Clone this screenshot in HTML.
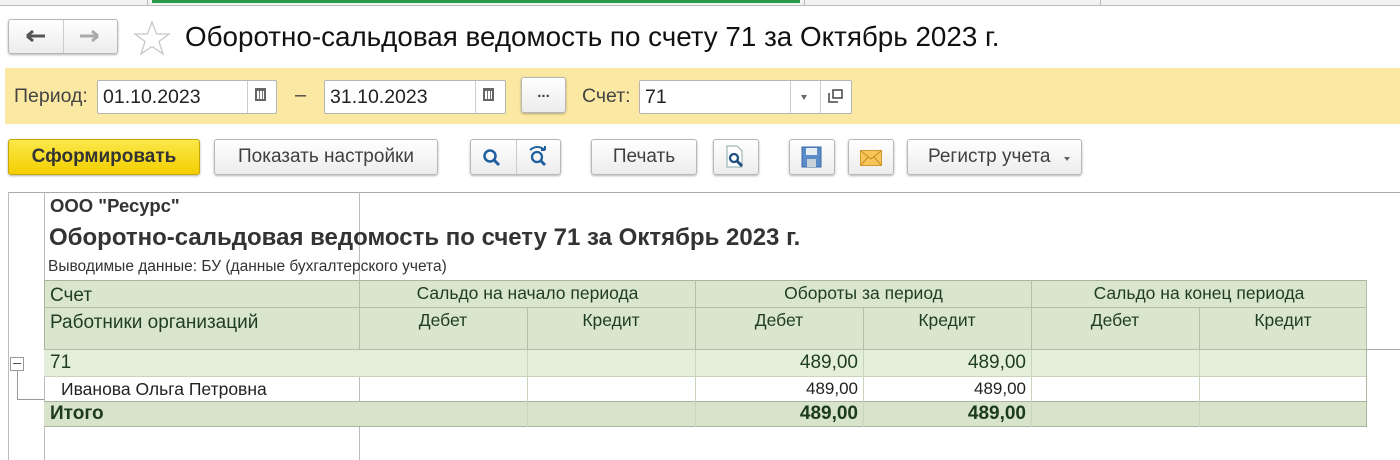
<!DOCTYPE html>
<html><head><meta charset="utf-8"><style>
*{box-sizing:border-box;margin:0;padding:0}
body{width:1400px;height:460px;background:#fff;font-family:"Liberation Sans","Noto Sans CJK SC",sans-serif;position:relative;overflow:hidden;color:#333}
.a{position:absolute}
.btn{position:absolute;border:1px solid #b8b8b8;border-radius:3px;background:linear-gradient(#fff,#ececec);box-shadow:0 1px 2px rgba(0,0,0,.3);font-size:19px;color:#404040;text-align:center;line-height:34px;height:36px;white-space:nowrap}
.inp{position:absolute;background:#fff;border:1px solid #b5b5b5;border-radius:2px;height:34px;font-size:19.5px;color:#222;line-height:32px;padding-left:5px}
.t{position:absolute;font-size:19px;color:#1f3d22;white-space:nowrap}
.cell{position:absolute;border-right:1px solid #b3bfa8;border-bottom:1px solid #b3bfa8}
.h{font-size:17.5px}
</style></head><body>
<div class="a" style="left:0;top:0;width:1400px;height:6px;background:#f2f2f2;border-bottom:1px solid #bdbdbd"></div>
<div class="a" style="left:152px;top:0;width:648px;height:3px;background:#2a9a4a"></div>
<div class="a" style="left:147px;top:0;width:1px;height:6px;background:#bbb"></div>
<div class="a" style="left:804px;top:0;width:1px;height:6px;background:#bbb"></div>
<div class="a" style="left:1100px;top:0;width:1px;height:6px;background:#bbb"></div>
<div class="btn" style="left:8px;top:19px;width:110px;height:35px"></div>
<div class="a" style="left:63px;top:20px;width:1px;height:33px;background:#ccc"></div>
<svg class="a" style="left:24px;top:29px" width="24" height="16"><path d="M3 7H21M3 7L9 2M3 7L9 12" stroke="#555" stroke-width="3" fill="none"/></svg>
<svg class="a" style="left:78px;top:29px" width="24" height="16"><path d="M2 7H20M20 7L14 2M20 7L14 12" stroke="#aaa" stroke-width="3" fill="none"/></svg>
<svg class="a" style="left:133px;top:20px" width="38" height="36"><path d="M19 2L23.5 14H36L26 21.5L30 34L19 26.5L8 34L12 21.5L2 14H14.5Z" fill="none" stroke="#c8c8c8" stroke-width="1.3"/></svg>
<div class="a" style="left:185px;top:21px;font-size:27.8px;color:#111;white-space:nowrap">Оборотно-сальдовая ведомость по счету 71 за Октябрь 2023 г.</div>
<div class="a" style="left:5px;top:68px;width:1395px;height:56px;background:#fbe9a3"></div>
<div class="a" style="left:14px;top:85px;font-size:19.5px;color:#444">Период:</div>
<div class="inp" style="left:97px;top:80px;width:180px">01.10.2023</div>
<div class="a" style="left:247px;top:81px;width:1px;height:32px;background:#ccc"></div>
<div class="a" style="left:255px;top:88px;width:11px;height:13px;border:2px solid #666;border-top-width:3px;background:repeating-linear-gradient(90deg,#fff 0 2px,#777 2px 3px)"></div>
<div class="a" style="left:295px;top:84px;font-size:20px;color:#444">–</div>
<div class="inp" style="left:324px;top:80px;width:182px">31.10.2023</div>
<div class="a" style="left:475px;top:81px;width:1px;height:32px;background:#ccc"></div>
<div class="a" style="left:483px;top:88px;width:11px;height:13px;border:2px solid #666;border-top-width:3px;background:repeating-linear-gradient(90deg,#fff 0 2px,#777 2px 3px)"></div>
<div class="btn" style="left:521px;top:77px;width:45px;height:36px;line-height:30px;font-size:15px;font-weight:bold">...</div>
<div class="a" style="left:582px;top:85px;font-size:19.5px;color:#444">Счет:</div>
<div class="inp" style="left:639px;top:80px;width:213px">71</div>
<div class="a" style="left:790px;top:81px;width:1px;height:32px;background:#ccc"></div>
<div class="a" style="left:820px;top:81px;width:1px;height:32px;background:#ccc"></div>
<div class="a" style="left:801px;top:95px;width:0;height:0;border-left:3.5px solid transparent;border-right:3.5px solid transparent;border-top:5px solid #666"></div>
<svg class="a" style="left:828px;top:88px" width="16" height="16"><path d="M1 5V14H10" stroke="#444" stroke-width="1.5" fill="none"/><rect x="5" y="2" width="9" height="8" fill="#fff" stroke="#444" stroke-width="1.5"/></svg>
<div class="btn" style="left:8px;top:139px;width:192px;background:linear-gradient(#fbe84a,#f3cf00);border-color:#c6a600;font-weight:bold;color:#333">Сформировать</div>
<div class="btn" style="left:214px;top:139px;width:224px">Показать настройки</div>
<div class="btn" style="left:470px;top:139px;width:91px"></div>
<div class="a" style="left:516px;top:140px;width:1px;height:34px;background:#ccc"></div>
<svg class="a" style="left:482px;top:148px" width="20" height="20"><circle cx="8" cy="8" r="5.5" stroke="#1f5fa0" stroke-width="2.5" fill="none"/><path d="M12 12L17 17" stroke="#1f5fa0" stroke-width="3"/></svg>
<svg class="a" style="left:527px;top:145px" width="22" height="22"><path d="M3 5Q10 -1 18 5" stroke="#1f5fa0" stroke-width="2" fill="none"/><path d="M18 5L18 1M18 5L14 5" stroke="#1f5fa0" stroke-width="2"/><circle cx="10" cy="12" r="5" stroke="#1f5fa0" stroke-width="2.3" fill="none"/><path d="M13.5 15.5L18 20" stroke="#1f5fa0" stroke-width="3"/></svg>
<div class="btn" style="left:591px;top:139px;width:106px">Печать</div>
<div class="btn" style="left:713px;top:139px;width:46px"></div>
<svg class="a" style="left:724px;top:145px" width="24" height="26"><path d="M3 1H13L18 6V22H3Z" fill="#fff" stroke="#8aa" stroke-width="1"/><circle cx="10" cy="13" r="4" stroke="#1f5080" stroke-width="2.3" fill="none"/><path d="M13 16L18 21" stroke="#1f5080" stroke-width="3"/></svg>
<div class="btn" style="left:789px;top:139px;width:46px"></div>
<svg class="a" style="left:801px;top:146px" width="22" height="22"><rect x="1" y="1" width="19" height="20" fill="#5b8cc8" stroke="#3a6aa8"/><rect x="5" y="2" width="11" height="7" fill="#e8eef5"/><rect x="6" y="13" width="9" height="8" fill="#c8d0d8"/></svg>
<div class="btn" style="left:848px;top:139px;width:46px"></div>
<svg class="a" style="left:860px;top:150px" width="22" height="16"><rect x="0.5" y="0.5" width="21" height="15" fill="#f7c45a" stroke="#d19a30"/><path d="M1 1L11 9L21 1M1 15L8 7M21 15L14 7" stroke="#c88a20" fill="none"/></svg>
<div class="btn" style="left:907px;top:139px;width:175px;text-align:left;padding-left:20px">Регистр учета</div>
<div class="a" style="left:1064px;top:157px;width:0;height:0;border-left:3.5px solid transparent;border-right:3.5px solid transparent;border-top:4px solid #666"></div>
<div class="a" style="left:8px;top:192px;width:1392px;height:1px;background:#aaa"></div>
<div class="a" style="left:8px;top:192px;width:1px;height:268px;background:#bbb"></div>
<div class="a" style="left:44px;top:192px;width:1px;height:268px;background:#bbb"></div>
<div class="a" style="left:359px;top:192px;width:1px;height:268px;background:#bbb"></div>
<div class="a" style="left:50px;top:195px;font-size:18.5px;font-weight:bold;color:#333">ООО "Ресурс"</div>
<div class="a" style="left:49px;top:224px;font-size:24px;font-weight:bold;color:#333;white-space:nowrap">Оборотно-сальдовая ведомость по счету 71 за Октябрь 2023 г.</div>
<div class="a" style="left:48px;top:258px;font-size:15.5px;color:#333;white-space:nowrap">Выводимые данные: БУ (данные бухгалтерского учета)</div>
<div class="a" style="left:44px;top:280px;width:1323px;height:70px;background:#d9e5cc;border-top:1px solid #aab49f;border-left:1px solid #aab49f"></div>
<div class="cell" style="left:44px;top:280px;width:316px;height:28px"></div>
<div class="cell" style="left:359px;top:280px;width:337px;height:28px"></div>
<div class="cell" style="left:695px;top:280px;width:337px;height:28px"></div>
<div class="cell" style="left:1031px;top:280px;width:336px;height:28px"></div>
<div class="cell" style="left:44px;top:307px;width:316px;height:43px"></div>
<div class="cell" style="left:359px;top:307px;width:169px;height:43px"></div>
<div class="cell" style="left:527px;top:307px;width:169px;height:43px"></div>
<div class="cell" style="left:695px;top:307px;width:169px;height:43px"></div>
<div class="cell" style="left:863px;top:307px;width:169px;height:43px"></div>
<div class="cell" style="left:1031px;top:307px;width:169px;height:43px"></div>
<div class="cell" style="left:1199px;top:307px;width:168px;height:43px"></div>
<div class="t" style="left:50px;top:285px">Счет</div>
<div class="t" style="left:50px;top:312px">Работники организаций</div>
<div class="t h" style="left:359px;top:283px;width:337px;text-align:center">Сальдо на начало периода</div>
<div class="t h" style="left:695px;top:283px;width:337px;text-align:center">Обороты за период</div>
<div class="t h" style="left:1031px;top:283px;width:336px;text-align:center">Сальдо на конец периода</div>
<div class="t h" style="left:359px;top:310px;width:168px;text-align:center">Дебет</div>
<div class="t h" style="left:527px;top:310px;width:168px;text-align:center">Кредит</div>
<div class="t h" style="left:695px;top:310px;width:168px;text-align:center">Дебет</div>
<div class="t h" style="left:863px;top:310px;width:168px;text-align:center">Кредит</div>
<div class="t h" style="left:1031px;top:310px;width:168px;text-align:center">Дебет</div>
<div class="t h" style="left:1199px;top:310px;width:168px;text-align:center">Кредит</div>
<div class="a" style="left:1366px;top:349px;width:34px;height:1px;background:#aaa"></div>
<div class="a" style="left:44px;top:350px;width:1323px;height:26px;background:#e3eedb"></div>
<div class="a" style="left:44px;top:401px;width:1323px;height:26px;background:#d7e4c9;border-top:1px solid #aab49f;border-bottom:1px solid #aab49f"></div>
<div class="a" style="left:44px;top:376px;width:1323px;height:1px;background:#c8d4be"></div>
<div class="a" style="left:1366px;top:350px;width:1px;height:77px;background:#aab49f"></div>
<div class="a" style="left:527px;top:350px;width:1px;height:77px;background:#c8d4be"></div>
<div class="a" style="left:695px;top:350px;width:1px;height:77px;background:#c8d4be"></div>
<div class="a" style="left:863px;top:350px;width:1px;height:77px;background:#c8d4be"></div>
<div class="a" style="left:1031px;top:350px;width:1px;height:77px;background:#c8d4be"></div>
<div class="a" style="left:1199px;top:350px;width:1px;height:77px;background:#c8d4be"></div>
<div class="a" style="left:10px;top:357px;width:14px;height:14px;border:1px solid #999;background:#fff"></div>
<div class="a" style="left:13px;top:363px;width:8px;height:1px;background:#555"></div>
<div class="a" style="left:17px;top:371px;width:1px;height:28px;background:#999"></div>
<div class="a" style="left:17px;top:399px;width:27px;height:1px;background:#999"></div>
<div class="t" style="left:50px;top:352px">71</div>
<div class="t" style="left:695px;top:352px;width:163px;text-align:right">489,00</div>
<div class="t" style="left:863px;top:352px;width:163px;text-align:right">489,00</div>
<div class="t" style="left:61px;top:379px;font-size:17.5px;color:#222">Иванова Ольга Петровна</div>
<div class="t" style="left:695px;top:379px;width:163px;text-align:right;font-size:17px;color:#222">489,00</div>
<div class="t" style="left:863px;top:379px;width:163px;text-align:right;font-size:17px;color:#222">489,00</div>
<div class="t" style="left:50px;top:403px;font-weight:bold;color:#1b3a1e">Итого</div>
<div class="t" style="left:695px;top:403px;width:163px;text-align:right;font-weight:bold;color:#1b3a1e">489,00</div>
<div class="t" style="left:863px;top:403px;width:163px;text-align:right;font-weight:bold;color:#1b3a1e">489,00</div>
</body></html>
